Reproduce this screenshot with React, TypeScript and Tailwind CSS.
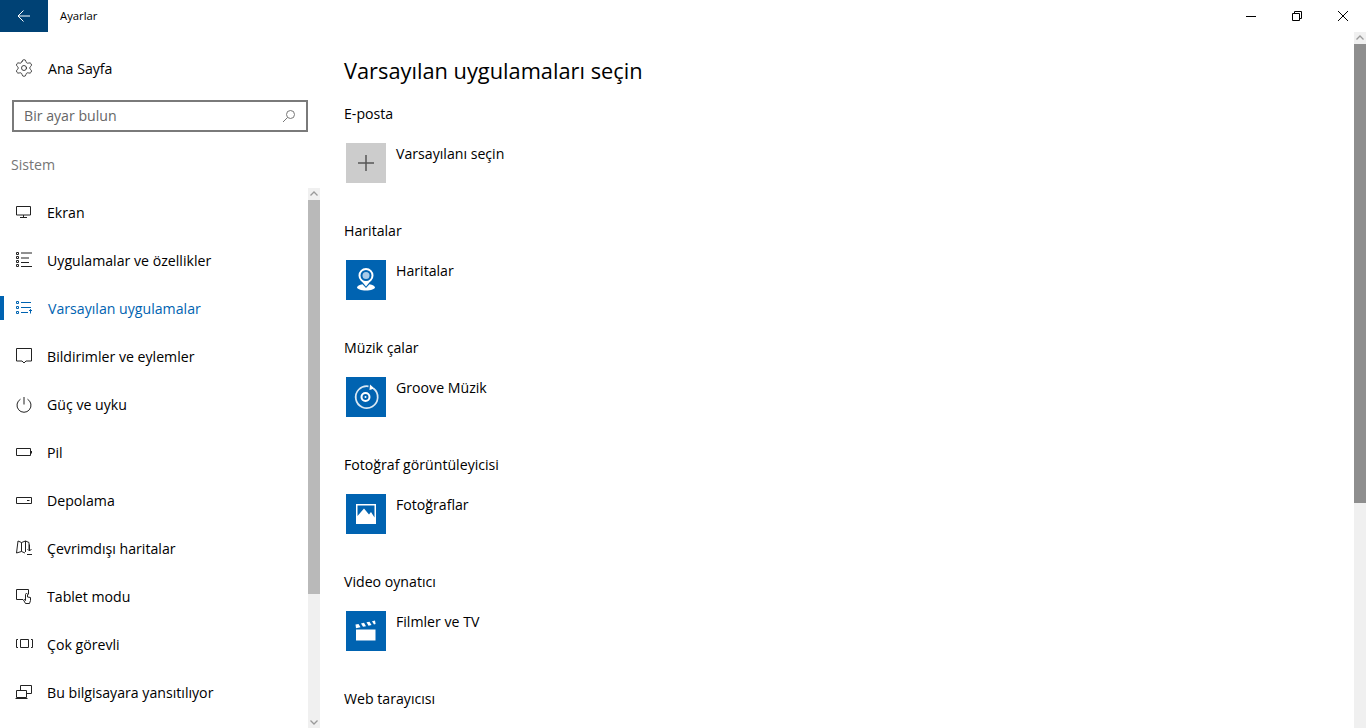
import type { ReactNode } from "react";
import { Settings } from "lucide-react";

const font = "font-['Open_Sans','Noto_Sans',sans-serif]";

function Ico({ children }: { children: ReactNode }) {
  return (
    <svg width="20" height="20" viewBox="0 0 20 20" fill="none" stroke="#222" strokeWidth="1" className="shrink-0">
      {children}
    </svg>
  );
}

const navItems: { label: string; icon: ReactNode; active?: boolean }[] = [
  {
    label: "Ekran",
    icon: (
      <Ico>
        <path d="M2.500 4.500h14v8.500h-14zM9.500 13v2.500M6 15.500h7" />
      </Ico>
    ),
  },
  {
    label: "Uygulamalar ve özellikler",
    icon: (
      <Ico>
        <path d="M2.500 2.500h2v2h-2zM2.500 6.500h2v2h-2zM2.500 10.500h2v2h-2zM2.500 14.500h2v2h-2zM7 3h11M7 8h8M7 12.500h8M7 16.500h11" />
      </Ico>
    ),
  },
  {
    label: "Varsayılan uygulamalar",
    active: true,
    icon: (
      <svg width="20" height="20" viewBox="0 0 20 20" fill="none" stroke="#0063b1" strokeWidth="1" className="shrink-0">
        <path d="M2.500 3.500h2v2h-2zM2.500 8.500h2v2h-2zM2.500 13.500h2v2h-2zM7 4.500h10M7 9.500h10M7 14.500h7M16.500 15.500v-4M15 13l1.500-1.500L18 13" />
      </svg>
    ),
  },
  {
    label: "Bildirimler ve eylemler",
    icon: (
      <Ico>
        <path d="M2.500 2.500h15v12.500h-5.500l-2 2-2-2h-5.500z" />
      </Ico>
    ),
  },
  {
    label: "Güç ve uyku",
    icon: (
      <Ico>
        <path d="M10 3v7.500M6.500 5.200a7 7 0 1 0 7 0" />
      </Ico>
    ),
  },
  {
    label: "Pil",
    icon: (
      <Ico>
        <path d="M2.500 6.500h14v7h-14zM17.500 9v2.500" />
      </Ico>
    ),
  },
  {
    label: "Depolama",
    icon: (
      <Ico>
        <path d="M2.500 7.500h15v6h-15zM13 10.500h2.500" />
      </Ico>
    ),
  },
  {
    label: "Çevrimdışı haritalar",
    icon: (
      <Ico>
        <path d="M4 3l3.500 1.500L11.500 3l3.500 1.500v6.500M4 3L2.500 15l5-1.500 3.500 1.500M7.500 4.500v9M11.500 3v11M15.500 6.500v6.500M13.500 11l2 2 2-2M13 16.500h5" />
      </Ico>
    ),
  },
  {
    label: "Tablet modu",
    icon: (
      <Ico>
        <path d="M9 13.500h-6.500v-10h12v5M11.500 17.500l-2-3.500 1-.5 1 1V8.500a1 1 0 0 1 2 0v2.500l3 .5v3l-1 3z" />
      </Ico>
    ),
  },
  {
    label: "Çok görevli",
    icon: (
      <Ico>
        <path d="M6.500 5.500h8v8h-8zM4 5.500h-1.500v8H4M17 5.500h1.500v8H17" />
      </Ico>
    ),
  },
  {
    label: "Bu bilgisayara yansıtılıyor",
    icon: (
      <Ico>
        <path d="M6.500 8v-4.500h11v8h-5M2.500 8.500h10v7h-10zM1.500 16.500h12" />
      </Ico>
    ),
  },
];

const sections: { title: string; name?: string; icon?: ReactNode }[] = [
  { title: "E-posta", name: "Varsayılanı seçin" },
  {
    title: "Haritalar",
    name: "Haritalar",
    icon: (
      <svg width="40" height="40" viewBox="0 0 40 40" fill="none" stroke="#fff">
        <path d="M11 27.500c0-1.500 2.500-2.800 5.500-3.300L20 28l3.500-3.800c3 .5 5.500 1.800 5.500 3.300 0 1.500-4 3-9 3s-9-1.500-9-3z" fill="#fff" stroke="none" />
        <circle cx="20" cy="15.500" r="6.500" strokeWidth="2" fill="#0063b1" />
        <circle cx="20" cy="15.500" r="3.500" fill="#a9cbe8" stroke="none" />
        <path d="M15.500 21l4.500 5.500 4.500-5.500" fill="#fff" stroke="none" />
      </svg>
    ),
  },
  {
    title: "Müzik çalar",
    name: "Groove Müzik",
    icon: (
      <svg width="40" height="40" viewBox="0 0 40 40" fill="none" stroke="#fff">
        <path d="M27.500 11.500a11 11 0 1 1-5-2.200" strokeWidth="1.700" opacity="0.85" />
        <circle cx="19.500" cy="20" r="4" strokeWidth="2" />
        <circle cx="19.500" cy="20" r="1" fill="#fff" stroke="none" />
        <path d="M24 7.500l4.500 4-5 1.500z" fill="#fff" stroke="none" />
      </svg>
    ),
  },
  {
    title: "Fotoğraf görüntüleyicisi",
    name: "Fotoğraflar",
    icon: (
      <svg width="40" height="40" viewBox="0 0 40 40">
        <path d="M10 10h20v20H10z" fill="#fff" />
        <path d="M11.500 11.500h17v12l-3.500-5.500-2 2.500-5-6-6.500 7.500z" fill="#0063b1" />
      </svg>
    ),
  },
  {
    title: "Video oynatıcı",
    name: "Filmler ve TV",
    icon: (
      <svg width="40" height="40" viewBox="0 0 40 40" fill="#fff">
        <path d="M10 18.500h19.500v11H10z" />
        <path d="M9.500 13.500l3-.6 2 3.400-4.500.9zM15 12.400l3-.6 2 3.400-3 .6zM20.500 11.300l3-.6 2 3.400-3 .6zM26 10.200l3-.6.600 3.500-1.600.4z" />
      </svg>
    ),
  },
  { title: "Web tarayıcısı" },
];

function Chevron({ down }: { down?: boolean }) {
  return (
    <svg width="12" height="12" viewBox="0 0 12 12" fill="none" stroke="#9a9a9a" strokeWidth="1.300">
      <path d={down ? "M2.500 4.500L6 8l3.500-3.500" : "M2.500 7.500L6 4l3.500 3.500"} />
    </svg>
  );
}

export default function App() {
  return (
    <div className={`h-[728px] w-full overflow-hidden bg-white flex flex-col text-[#000] ${font}`}>
      {/* Title bar */}
      <div className="h-8 flex items-center shrink-0">
        <div className="w-12 h-8 bg-[#004275] flex items-center justify-center">
          <svg width="14" height="14" viewBox="0 0 14 14" fill="none" stroke="#fff" strokeWidth="1">
            <path d="M13 7H1M6.500 1.500L1 7l5.500 5.500" />
          </svg>
        </div>
        <span className="ml-3 text-[11.3px]">Ayarlar</span>
        <div className="ml-auto flex">
          <div className="w-[46px] h-8 flex items-center justify-center">
            <svg width="10" height="10" viewBox="0 0 10 10" stroke="#000" strokeWidth="1">
              <path d="M0 5.500h10" />
            </svg>
          </div>
          <div className="w-[46px] h-8 flex items-center justify-center">
            <svg width="10" height="10" viewBox="0 0 10 10" fill="none" stroke="#000" strokeWidth="1">
              <path d="M.5 2.500h7v7h-7zM2.500 2.500v-2h7v7h-2" />
            </svg>
          </div>
          <div className="w-[46px] h-8 flex items-center justify-center">
            <svg width="10" height="10" viewBox="0 0 10 10" stroke="#000" strokeWidth="1">
              <path d="M0 0l10 10M10 0L0 10" />
            </svg>
          </div>
        </div>
      </div>

      <div className="flex-1 flex min-h-0">
        {/* Sidebar */}
        <div className="w-[320px] shrink-0 flex flex-col">
          <div className="h-[56px] mt-3 pb-2 pl-[14px] flex items-center gap-[14px]">
            <Settings size={20} strokeWidth={1} color="#222" />
            <span className="text-[14.15px] leading-5 pt-[2px]">Ana Sayfa</span>
          </div>
          <div className="mx-3 h-8 border-2 border-[#7a7a7a] flex items-center px-[10px] justify-between">
            <span className="text-[14.15px] leading-5 pb-px text-[#666]">Bir ayar bulun</span>
            <svg width="14" height="14" viewBox="0 0 14 14" fill="none" stroke="#777" strokeWidth="1">
              <circle cx="8.500" cy="5.500" r="4" />
              <path d="M5.500 8.500L1 13" />
            </svg>
          </div>
          <div className="h-14 pl-[11px] pt-[10px] flex items-center text-[14.15px] leading-5 text-[#767676]">Sistem</div>
          <div className="flex-1 flex min-h-0">
            <div className="flex-1">
              {navItems.map((item) => (
                <div key={item.label} className="relative h-12 pl-[14px] flex items-center gap-[13px]">
                  {item.active && <div className="absolute left-0 top-3 w-1 h-6 bg-[#0063b1]" />}
                  {item.icon}
                  <span className={`text-[14.15px] leading-5 pt-[2px] ${item.active ? "text-[#0063b1] ml-px" : ""}`}>{item.label}</span>
                </div>
              ))}
            </div>
            <div className="w-3 bg-[#f0f0f0] flex flex-col">
              <div className="h-3"><Chevron /></div>
              <div className="h-[394px] bg-[#b9b9b9]" />
              <div className="mt-auto h-3"><Chevron down /></div>
            </div>
          </div>
        </div>

        {/* Content */}
        <div className="flex-1 min-w-0 pl-6 pt-[23px] overflow-hidden">
          <h1 className="text-[21.8px] leading-8">Varsayılan uygulamaları seçin</h1>
          <div className="mt-[15px]">
            {sections.map((s) => (
              <div key={s.title} className="h-[117px]">
                <div className="text-[14.15px] leading-6">{s.title}</div>
                {s.name && (
                  <div className="mt-[17px] ml-[2px] flex gap-[10px]">
                    <div className={`w-10 h-10 flex items-center justify-center ${s.icon ? "bg-[#0063b1]" : "bg-[#cccccc]"}`}>
                      {s.icon ?? (
                        <svg width="18" height="18" viewBox="0 0 18 18" stroke="#555" strokeWidth="1.500">
                          <path d="M9 1v16M1 9h16" />
                        </svg>
                      )}
                    </div>
                    <div className="text-[14.15px] leading-[22px]">{s.name}</div>
                  </div>
                )}
              </div>
            ))}
          </div>
        </div>

        {/* Main scrollbar */}
        <div className="w-3 shrink-0 bg-[#f0f0f0] flex flex-col">
          <div className="h-3"><Chevron /></div>
          <div className="h-[459px] bg-[#8e8e8e]" />
        </div>
      </div>
    </div>
  );
}
